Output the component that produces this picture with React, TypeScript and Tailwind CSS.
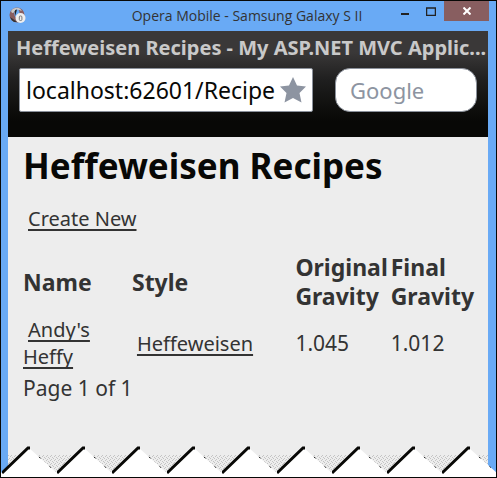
import React from "react";

const linkClass =
  "ml-[5px] text-[20px] underline decoration-2 underline-offset-[3px] [text-decoration-skip-ink:none]";

const recipes = [
  { name: "Andy's Heffy", style: "Heffeweisen", original: "1.045", final: "1.012" },
];

function OperaIcon() {
  return (
    <svg width="17" height="17" viewBox="0 0 17 17" aria-hidden="true">
      <circle cx="8" cy="8" r="7.5" fill="#885e60" />
      <path d="M2 4C4 1 8 0 11 1.5L13 4L10 3L7 5L3 6Z" fill="#c9c9c9" />
      <path d="M1 10L4 12L8 15L5 15Q2 13 1 10Z" fill="#333" />
      <ellipse cx="8" cy="6.5" rx="2.6" ry="4" fill="#69aaf5" />
      <path d="M5.5 4.5Q6 2.500 8 2.500L7 6V9Z" fill="#222" />
      <circle cx="11.500" cy="11" r="5" fill="#eee" />
      <rect x="10.300" y="9" width="2.600" height="4.500" rx="1" fill="none" stroke="#777" />
    </svg>
  );
}

function TitleBar() {
  return (
    <header className="flex h-[30px] shrink-0 items-start pl-2 pr-[7px]">
      <span className="mt-[6px] w-[18px]"><OperaIcon /></span>
      <h2 className="flex-1 pt-[4px] pl-[76px] text-center font-['Open_Sans',sans-serif] text-[14px] leading-[22px] text-[#333]">
        Opera Mobile - Samsung Galaxy S II
      </h2>
      <button aria-label="Minimize" className="flex h-[20px] w-[27px] items-center justify-center">
        <svg width="10" height="10" aria-hidden="true"><path d="M1 8H9" stroke="#222" strokeWidth="2" /></svg>
      </button>
      <button aria-label="Maximize" className="flex h-[20px] w-[26px] items-center justify-center">
        <svg width="10" height="9" aria-hidden="true"><path d="M.5 1V8.500H9.500V1M0 1H10" fill="none" stroke="#222" strokeWidth="1.500" /></svg>
      </button>
      <button aria-label="Close" className="flex h-[20px] w-[45px] items-center justify-center bg-[#885e60]">
        <svg width="8" height="8" aria-hidden="true"><path d="M.5 .5L7.500 7.500M7.500 .5L.5 7.500" stroke="#fff" strokeWidth="2" /></svg>
      </button>
    </header>
  );
}

function BrowserBar() {
  return (
    <div className="h-[106px] shrink-0 bg-linear-to-b from-[#3a3838] from-20% via-[#202020] via-45% to-[#080806] to-85% px-2">
      <p className="pt-[3px] text-[20px] leading-[28px] font-bold whitespace-nowrap text-[#c9c9c9]">
        Heffeweisen Recipes - My ASP.NET MVC Applic...
      </p>
      <form className="mt-[6px] flex gap-[22px] pr-[3px] pl-[3px]">
        <div className="flex h-[44px] min-w-0 flex-1 items-center rounded-xs border border-[#8b919b] bg-white pr-[5px]">
          <input
            aria-label="Address"
            defaultValue="localhost:62601/Recipe"
            className="h-full min-w-0 flex-1 pl-[6px] text-[23px] text-[#080806] outline-none"
          />
          <button type="button" aria-label="Bookmark">
            <svg width="28" height="28" viewBox="0 0 28 28" aria-hidden="true">
              <path d="M14 1L18 9.500L27 10.500L20.500 17L22.500 26.500L14 22L5.500 26.500L7.500 17L1 10.500L10 9.500Z" fill="#8d94a1" />
            </svg>
          </button>
        </div>
        <input
          aria-label="Search"
          placeholder="Google"
          className="h-[44px] w-[142px] rounded-[15px] border border-[#8b919b] bg-white pl-[14px] text-[22px] placeholder:text-[#8d94a1]"
        />
      </form>
    </div>
  );
}

function TornEdge() {
  return (
    <svg className="absolute inset-x-0 bottom-0 h-[31px] w-full" aria-hidden="true">
      <defs>
        <pattern id="grain" width="4" height="4" patternUnits="userSpaceOnUse">
          <path d="M0 0H1V1H0ZM2 1H3V2H2ZM1 2H2V3H1ZM3 3H4V4H3Z" fill="#c4c4c4" />
        </pattern>
        <pattern id="teeth" x="1" width="55" height="31" patternUnits="userSpaceOnUse">
          <path d="M0 31V27L27 2L55 27V31Z" fill="#fff" />
          <path d="M0 27L26 2H28" fill="none" stroke="#080806" strokeWidth="3" />
          <path d="M28 3L55 27" stroke="#222" strokeDasharray="2 12" strokeDashoffset="-12" />
        </pattern>
        <pattern id="shade" x="1" width="55" height="31" patternUnits="userSpaceOnUse">
          <path d="M0 9H55V27H0Z" fill="url(#grain)" />
        </pattern>
      </defs>
      <svg x="7" width="100%" height="31" className="overflow-hidden">
        <rect width="100%" height="31" fill="url(#shade)" clipPath="inset(0 15px 0 0)" />
      </svg>
      <rect width="100%" height="31" fill="url(#teeth)" />
    </svg>
  );
}

export default function App() {
  return (
    <div className="relative flex min-h-screen flex-col border border-[#080806] bg-[#69aaf5] font-['Noto_Sans',sans-serif]">
      <TitleBar />
      <div className="mr-[8px] ml-[7px] flex flex-1 flex-col bg-[#ededed]">
        <BrowserBar />
        <main className="pr-[11px] pl-[15px] pt-[8px] pb-10 text-[21px] leading-[27px] text-[#333]">
          <h1 className="text-[35px] leading-[42px] font-bold whitespace-nowrap text-[#080806]">Heffeweisen Recipes</h1>
          <p className="mt-[18px]"><a href="#create" className={linkClass}>Create New</a></p>
          <table className="mt-[21px] w-full table-fixed text-left">
            <colgroup>
              <col className="w-[24%]" />
              <col className="w-[36%]" />
              <col className="w-[21%]" />
              <col className="w-[19%]" />
            </colgroup>
            <thead className="text-[23px] leading-[29px]">
              <tr>
                <th>Name</th>
                <th>Style</th>
                <th>Original Gravity</th>
                <th>Final Gravity</th>
              </tr>
            </thead>
            <tbody>
              {recipes.map((r) => (
                <tr key={r.name}>
                  <td className="pt-[5px] pr-4"><a href="#recipe" className={linkClass}>{r.name}</a></td>
                  <td className="pt-[5px]"><a href="#style" className={linkClass}>{r.style}</a></td>
                  <td className="pt-[5px]">{r.original}</td>
                  <td className="pt-[5px]">{r.final}</td>
                </tr>
              ))}
            </tbody>
          </table>
          <p className="mt-[5px]">Page 1 of 1</p>
        </main>
      </div>
      <TornEdge />
    </div>
  );
}
